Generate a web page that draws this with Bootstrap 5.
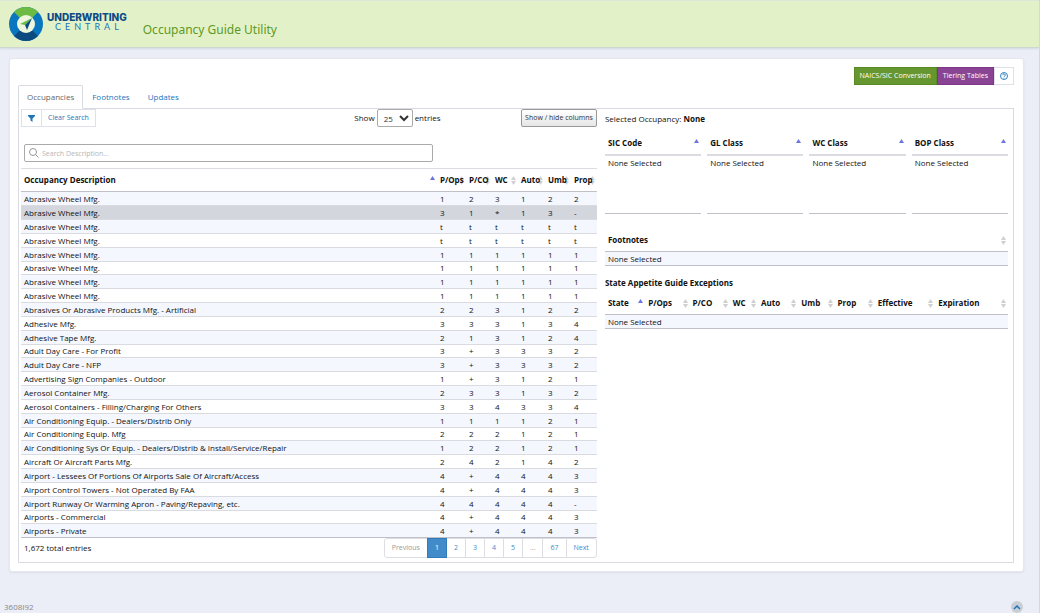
<!DOCTYPE html>
<html lang="en">
<head>
<meta charset="utf-8">
<meta name="viewport" content="width=device-width, initial-scale=1">
<title>Occupancy Guide Utility</title>
<link href="https://cdn.jsdelivr.net/npm/bootstrap@5.3.0/dist/css/bootstrap.min.css" rel="stylesheet">
<style>
  :root {
    --sort-both: url("data:image/svg+xml,%3Csvg xmlns='http://www.w3.org/2000/svg' viewBox='0 0 5 9'%3E%3Cpath d='M2.5 0 5 4H0zM2.5 9 5 5H0z' fill='%23d0d0d3'/%3E%3C/svg%3E");
    --sort-asc: url("data:image/svg+xml,%3Csvg xmlns='http://www.w3.org/2000/svg' viewBox='0 0 5 9'%3E%3Cpath d='M2.5 0 5 4H0z' fill='%236b74e0'/%3E%3C/svg%3E");
  }
  body { font-family: "Open Sans", "Noto Sans", sans-serif; font-size: 8px; line-height: 12px; color: #111; background: #ebeef6; border-right: 1px solid #d6d7dc; min-height: 100vh; }
  a { text-decoration: none; }
  .app-bar { background: #e3f1c9; border-top: 1px solid #dce6d6; border-bottom: 1px solid #cfd6cf; box-shadow: 0 1px 2px #d4d8e2; height: 48px; padding: 0 9px; }
  .brand-top { font-family: Inter, sans-serif; font-weight: 800; font-size: 10px; line-height: 9px; color: #0d4a86; }
  .brand-sub { font-family: Lato, sans-serif; font-size: 9px; line-height: 9px; letter-spacing: 4px; color: #1675bb; padding-left: 8px; }
  .app-title { font-family: "Noto Sans", sans-serif; font-size: 12px; line-height: 18px; color: #5c9a22; }
  .sheet { background: #fff; border: 1px solid #e4e7ee; border-radius: 3px; box-shadow: 0 1px 2px #dcdfe8; margin: 10px 15px 0 9px; padding: 8px 9px 8px 8px; }
  .tool { font-size: 7px; line-height: 12px; padding: 2px 5px; border-radius: 0; border: 1px solid transparent; }
  .tool-green { background: #66962f; border-color: #5a8a24; color: #fff; }
  .tool-purple { background: #894593; border-color: #7c3787; color: #fff; }
  .tool-plain { background: #fff; border-color: #dfe1e8; color: #1d75bd; }
  .filters .tool { padding: 2px 6px; }
  .tabs { --bs-nav-link-padding-x: 8px; --bs-nav-link-padding-y: 5px; --bs-nav-link-font-size: 8px; --bs-nav-tabs-border-radius: 2px; --bs-nav-tabs-border-color: #d9dae2; --bs-nav-link-color: #1d75bd; --bs-nav-tabs-link-active-color: #666; --bs-nav-tabs-link-active-border-color: #d9dae2 #d9dae2 #fff; }
  .pane { border: 1px solid #d9dae2; border-top: 0; padding: 0 5px 4px 2px; display: grid; grid-template-columns: 10fr 7fr; gap: 8px; }
  .entries { gap: 2px; margin: 0 14% 0 auto; }
  .entries select { width: 36px; height: 18px; font-size: 8px; border: 1px solid #aaa; border-radius: 2px; background: #fff; padding: 0 0 0 2px; color: #333; }
  .hide-cols { border: 1px solid #999; background: linear-gradient(#fff, #e6e6e6); border-radius: 2px; color: #333; padding: 2px 3px; }
  .search { position: relative; width: 71%; margin: 17px 3px 6px; }
  .search svg { position: absolute; left: 5px; top: 4px; }
  .search input { width: 100%; height: 18px; border: 1px solid #aaa; border-radius: 2px; padding: 0 17px; font-size: 7px; }
  .search input::placeholder { color: #b5b5b5; }
  .grid { width: 100%; table-layout: fixed; border-collapse: separate; border-spacing: 0; }
  .grid th, .grid td { padding: 0 3px; line-height: 12px; white-space: nowrap; }
  .grid th { height: 23px; border-bottom: 1px solid #bfc0c8; background: var(--sort-both) right 2px center / 5px 9px no-repeat; }
  .grid th.asc { background-image: var(--sort-asc); }
  .grid td { height: 14px; line-height: 11px; padding-bottom: 1px; border-bottom: 1px solid #dadbe1; }
  .grid tbody tr:nth-child(odd) { background: #f4f7fe; }
  .grid tbody tr:last-child td { border-bottom-color: #bfc0c8; }
  .main-grid { border-top: 1px solid #dcdce2; }
  .main-grid tr:nth-child(6n) td { height: 13px; }
  .main-grid tbody tr.picked { background: #d3d6dd; }
  .selected { margin: 4px 0 7px; }
  .codes { display: grid; grid-template-columns: repeat(4, 1fr); gap: 6px; margin-bottom: 15px; }
  .codes .grid th { height: 24px; border-bottom: 2px solid #dbdbe2; }
  .codes .grid td { height: 58px; vertical-align: top; border-color: #bbb; background: #fff; padding-top: 1px; }
  .state-title { margin: 11px 0 3px; }
  .pages { --bs-pagination-font-size: 7px; --bs-pagination-padding-x: 7px; --bs-pagination-padding-y: 3px; --bs-pagination-color: #428bca; --bs-pagination-border-color: #dddde3; --bs-pagination-border-radius: 3px; --bs-pagination-active-bg: #428bca; --bs-pagination-active-border-color: #327bba; --bs-pagination-disabled-bg: #fff; --bs-pagination-disabled-color: #999; --bs-pagination-disabled-border-color: #dddde3; }
  .total { padding-left: 3px; }
  .form-no { color: #888; }
  .to-top { width: 12px; height: 12px; background: #c9cdd4; }
</style>
</head>
<body class="d-flex flex-column">
<header class="app-bar d-flex align-items-center">
  <svg width="34" height="34" viewBox="0 0 34 34" aria-hidden="true">
    <circle cx="17" cy="17" r="17" fill="#0b76c0"/>
    <path d="M17 17 5 5a17 17 0 0 1 24 0z" fill="#6cbb45"/>
    <path d="M17 17 5 29a17 17 0 0 0 24 0z" fill="#0d4a80"/>
    <circle cx="17" cy="17" r="9" fill="#eef6dd"/>
    <path d="M23 11 11 17l5 1z" fill="#6cbb45"/><path d="M23 11 16 18l2 5z" fill="#0d4a80"/>
  </svg>
  <div class="ms-1 mb-1">
    <div class="brand-top">UNDERWRITING</div>
    <div class="brand-sub">CENTRAL</div>
  </div>
  <h1 class="app-title fw-normal mb-0 ms-3 mt-2 pt-1">Occupancy Guide Utility</h1>
</header>

<main class="sheet">
  <div class="d-flex justify-content-end">
    <button type="button" class="tool tool-green">NAICS/SIC Conversion</button>
    <button type="button" class="tool tool-purple">Tiering Tables</button>
    <button type="button" class="tool tool-plain d-flex align-items-center" aria-label="Help">
      <svg width="8" height="8" viewBox="0 0 16 16" fill="none" stroke="currentColor" stroke-width="1.800"><circle cx="8" cy="8" r="7"/><path d="M5.500 6.300a2.500 2.500 0 1 1 3.500 2.200q-1 .4-1 1.500M8 11.500v1.500"/></svg>
    </button>
  </div>
  <ul class="nav nav-tabs tabs" role="tablist">
    <li class="nav-item"><a class="nav-link active" href="#occupancies">Occupancies</a></li>
    <li class="nav-item"><a class="nav-link" href="#footnotes">Footnotes</a></li>
    <li class="nav-item"><a class="nav-link" href="#updates">Updates</a></li>
  </ul>
  <div class="pane" id="occupancies">
    <section>
      <div class="d-flex">
        <div class="filters d-flex">
          <button type="button" class="tool tool-plain d-flex align-items-center border-end-0" aria-label="Filter">
            <svg width="7" height="7" viewBox="0 0 14 14" fill="currentColor"><path d="M0 0h14v2L9 7v7l-4-3V7L0 2z"/></svg>
          </button>
          <button type="button" class="tool tool-plain">Clear Search</button>
        </div>
        <div class="entries d-flex align-items-center">
          <label for="size">Show</label>
          <select id="size"><option>10</option><option selected>25</option><option>50</option></select>
          <label for="size">entries</label>
        </div>
        <button type="button" class="tool hide-cols">Show / hide columns</button>
      </div>
      <div class="search">
        <svg width="10" height="10" viewBox="0 0 10 10" fill="none" stroke="#999" aria-hidden="true"><circle cx="4" cy="4" r="3.500"/><path d="m6.500 6.500 3 3"/></svg>
        <input type="text" aria-label="Search description" placeholder="Search Description...">
      </div>
      <table class="grid main-grid">
        <colgroup><col><col style="width:29px"><col style="width:26px"><col style="width:26px"><col style="width:27px"><col style="width:26px"><col style="width:26px"></colgroup>
        <thead><tr><th class="asc">Occupancy Description</th><th>P/Ops</th><th>P/CO</th><th>WC</th><th>Auto</th><th>Umb</th><th>Prop</th></tr></thead>
        <tbody id="rows"></tbody>
      </table>
      <div class="d-flex justify-content-between align-items-center">
        <span class="total">1,672 total entries</span>
        <ul class="pagination pages mb-0">
          <li class="page-item disabled"><a class="page-link" href="#">Previous</a></li>
          <li class="page-item active"><a class="page-link" href="#">1</a></li>
          <li class="page-item"><a class="page-link" href="#">2</a></li>
          <li class="page-item"><a class="page-link" href="#">3</a></li>
          <li class="page-item"><a class="page-link" href="#">4</a></li>
          <li class="page-item"><a class="page-link" href="#">5</a></li>
          <li class="page-item disabled"><a class="page-link" href="#">...</a></li>
          <li class="page-item"><a class="page-link" href="#">67</a></li>
          <li class="page-item"><a class="page-link" href="#">Next</a></li>
        </ul>
      </div>
    </section>
    <section>
      <p class="selected">Selected Occupancy: <b>None</b></p>
      <div class="codes">
        <table class="grid"><thead><tr><th class="asc">SIC Code</th></tr></thead><tbody><tr><td>None Selected</td></tr></tbody></table>
        <table class="grid"><thead><tr><th class="asc">GL Class</th></tr></thead><tbody><tr><td>None Selected</td></tr></tbody></table>
        <table class="grid"><thead><tr><th class="asc">WC Class</th></tr></thead><tbody><tr><td>None Selected</td></tr></tbody></table>
        <table class="grid"><thead><tr><th class="asc">BOP Class</th></tr></thead><tbody><tr><td>None Selected</td></tr></tbody></table>
      </div>
      <table class="grid"><thead><tr><th>Footnotes</th></tr></thead><tbody><tr><td>None Selected</td></tr></tbody></table>
      <p class="state-title fw-bold">State Appetite Guide Exceptions</p>
      <table class="grid">
        <colgroup><col style="width:10%"><col style="width:11%"><col style="width:10%"><col style="width:7%"><col style="width:10%"><col style="width:9%"><col style="width:10%"><col style="width:15%"><col></colgroup>
        <thead><tr><th class="asc">State</th><th>P/Ops</th><th>P/CO</th><th>WC</th><th>Auto</th><th>Umb</th><th>Prop</th><th>Effective</th><th>Expiration</th></tr></thead>
        <tbody><tr><td colspan="9">None Selected</td></tr></tbody>
      </table>
    </section>
  </div>
</main>

<footer class="mt-auto d-flex justify-content-between align-items-end ps-1 pe-3">
  <span class="form-no">3608I92</span>
  <a href="#" class="to-top rounded-circle d-flex align-items-center justify-content-center" aria-label="Back to top">
    <svg width="8" height="5" viewBox="0 0 8 5" fill="none" stroke="#1d75bd" stroke-width="1.500"><path d="m1 4 3-3 3 3"/></svg>
  </a>
</footer>

<script src="https://cdn.jsdelivr.net/npm/bootstrap@5.3.0/dist/js/bootstrap.bundle.min.js"></script>
<script>
  // Description, then one grade character per column
  const data = [
    ['Abrasive Wheel Mfg.', '123122'], ['Abrasive Wheel Mfg.', '31*13-'],
    ['Abrasive Wheel Mfg.', 'tttttt'], ['Abrasive Wheel Mfg.', 'tttttt'],
    ['Abrasive Wheel Mfg.', '111111'], ['Abrasive Wheel Mfg.', '111111'],
    ['Abrasive Wheel Mfg.', '111111'], ['Abrasive Wheel Mfg.', '111111'],
    ['Abrasives Or Abrasive Products Mfg. - Artificial', '223122'],
    ['Adhesive Mfg.', '333134'], ['Adhesive Tape Mfg.', '213124'],
    ['Adult Day Care - For Profit', '3+3332'], ['Adult Day Care - NFP', '3+3332'],
    ['Advertising Sign Companies - Outdoor', '1+3121'],
    ['Aerosol Container Mfg.', '233132'],
    ['Aerosol Containers - Filling/Charging For Others', '334334'],
    ['Air Conditioning Equip. - Dealers/Distrib Only', '111121'],
    ['Air Conditioning Equip. Mfg', '222121'],
    ['Air Conditioning Sys Or Equip. - Dealers/Distrib & Install/Service/Repair', '122121'],
    ['Aircraft Or Aircraft Parts Mfg.', '242142'],
    ['Airport - Lessees Of Portions Of Airports Sale Of Aircraft/Access', '4+4443'],
    ['Airport Control Towers - Not Operated By FAA', '4+4443'],
    ['Airport Runway Or Warming Apron - Paving/Repaving, etc.', '44444-'],
    ['Airports - Commercial', '4+4443'], ['Airports - Private', '4+4443']
  ];
  const body = document.getElementById('rows');
  data.forEach(([name, grades], i) => {
    const tr = body.insertRow();
    if (i === 1) tr.className = 'picked';
    [name, ...grades].forEach(v => tr.insertCell().textContent = v);
  });
</script>
</body>
</html>
